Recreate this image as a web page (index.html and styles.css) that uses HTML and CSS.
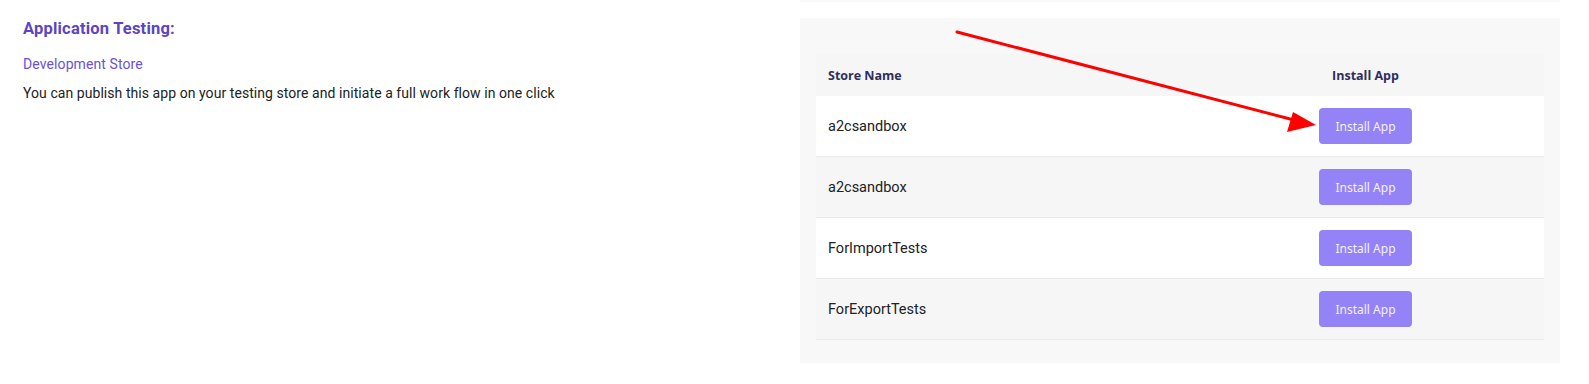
FILE: index.html
```html
<!DOCTYPE html>
<html lang="en">
<head>
    <meta charset="UTF-8">
    <meta name="viewport" content="width=device-width, initial-scale=1.0">
    <title>Application Testing</title>
    <link rel="stylesheet" href="styles.css">
</head>
<body>
    <div class="page">
        <div class="intro">
            <h2 class="intro-title">Application Testing:</h2>
            <div class="intro-sub">Development Store</div>
            <p class="intro-text">You can publish this app on your testing store and initiate a full work flow in one click</p>
        </div>

        <div class="side">
            <div class="prev-card"></div>
            <div class="store-card">
                <table class="store-table">
                    <thead>
                        <tr>
                            <th class="col-name">Store Name</th>
                            <th class="col-install">Install App</th>
                        </tr>
                    </thead>
                    <tbody>
                        <tr>
                            <td>a2csandbox</td>
                            <td class="col-install"><button class="install-btn">Install App</button></td>
                        </tr>
                        <tr>
                            <td>a2csandbox</td>
                            <td class="col-install"><button class="install-btn">Install App</button></td>
                        </tr>
                        <tr>
                            <td>ForImportTests</td>
                            <td class="col-install"><button class="install-btn">Install App</button></td>
                        </tr>
                        <tr>
                            <td>ForExportTests</td>
                            <td class="col-install"><button class="install-btn">Install App</button></td>
                        </tr>
                    </tbody>
                </table>
            </div>
        </div>
    </div>

    <!-- annotation arrow drawn over the screenshot -->
    <svg class="arrow" width="1589" height="384" viewBox="0 0 1589 384">
        <line x1="957" y1="32" x2="1294" y2="120" stroke="#ff0000" stroke-width="3" stroke-linecap="round"/>
        <polygon points="1316,125 1287,132 1293,112" fill="#ff0000"/>
    </svg>
</body>
</html>
```

FILE: styles.css
```css
body {
    margin: 0;
    padding: 0;
    background: #fff;
    font-family: Roboto, "Noto Sans", sans-serif;
    color: #202223;
}

.page {
    display: flex;
    align-items: flex-start;
}

.intro {
    flex: 1;
    padding: 19px 0 0 23px;
}
.intro-title {
    margin: 0;
    font-size: 16.5px;
    font-weight: 700;
    letter-spacing: 0.2px;
    color: #5b45c4;
    line-height: 20px;
}
.intro-sub {
    margin-top: 15px;
    font-size: 14px;
    letter-spacing: 0.1px;
    color: #6a52d3;
    line-height: 20px;
}
.intro-text {
    margin: 9px 0 0;
    font-size: 14px;
    letter-spacing: 0.06px;
    line-height: 20px;
    color: #202223;
}

.side {
    width: 760px;
    margin-right: 29px;
}
.prev-card {
    height: 2px;
    background: #f8f8f8;
}
.store-card {
    margin-top: 16px;
    background: #f8f8f8;
    padding: 36px 16px 23px;
}

.store-table {
    width: 100%;
    border-collapse: collapse;
    background: #fff;
}
.store-table th {
    background: #f6f6f7;
    height: 42px;
    padding: 0 12px;
    font-family: "Open Sans", sans-serif;
    font-size: 12.5px;
    font-weight: 700;
    color: #2e2f5c;
    text-align: left;
}
.store-table td {
    height: 60px;
    padding: 0 12px;
    font-size: 14.5px;
    color: #202223;
    border-bottom: 1px solid #e9e9ee;
}
.store-table tbody tr:nth-child(even) td {
    background: #f6f6f7;
}
.col-name {
    width: 347px;
}
.store-table .col-install {
    text-align: center;
}

.install-btn {
    width: 93px;
    height: 36px;
    border: none;
    border-radius: 4px;
    background: #9483f6;
    color: #f3f0ff;
    font-family: "Noto Sans", sans-serif;
    font-size: 12px;
    cursor: pointer;
}

.arrow {
    position: absolute;
    top: 0;
    left: 0;
    pointer-events: none;
}
```
